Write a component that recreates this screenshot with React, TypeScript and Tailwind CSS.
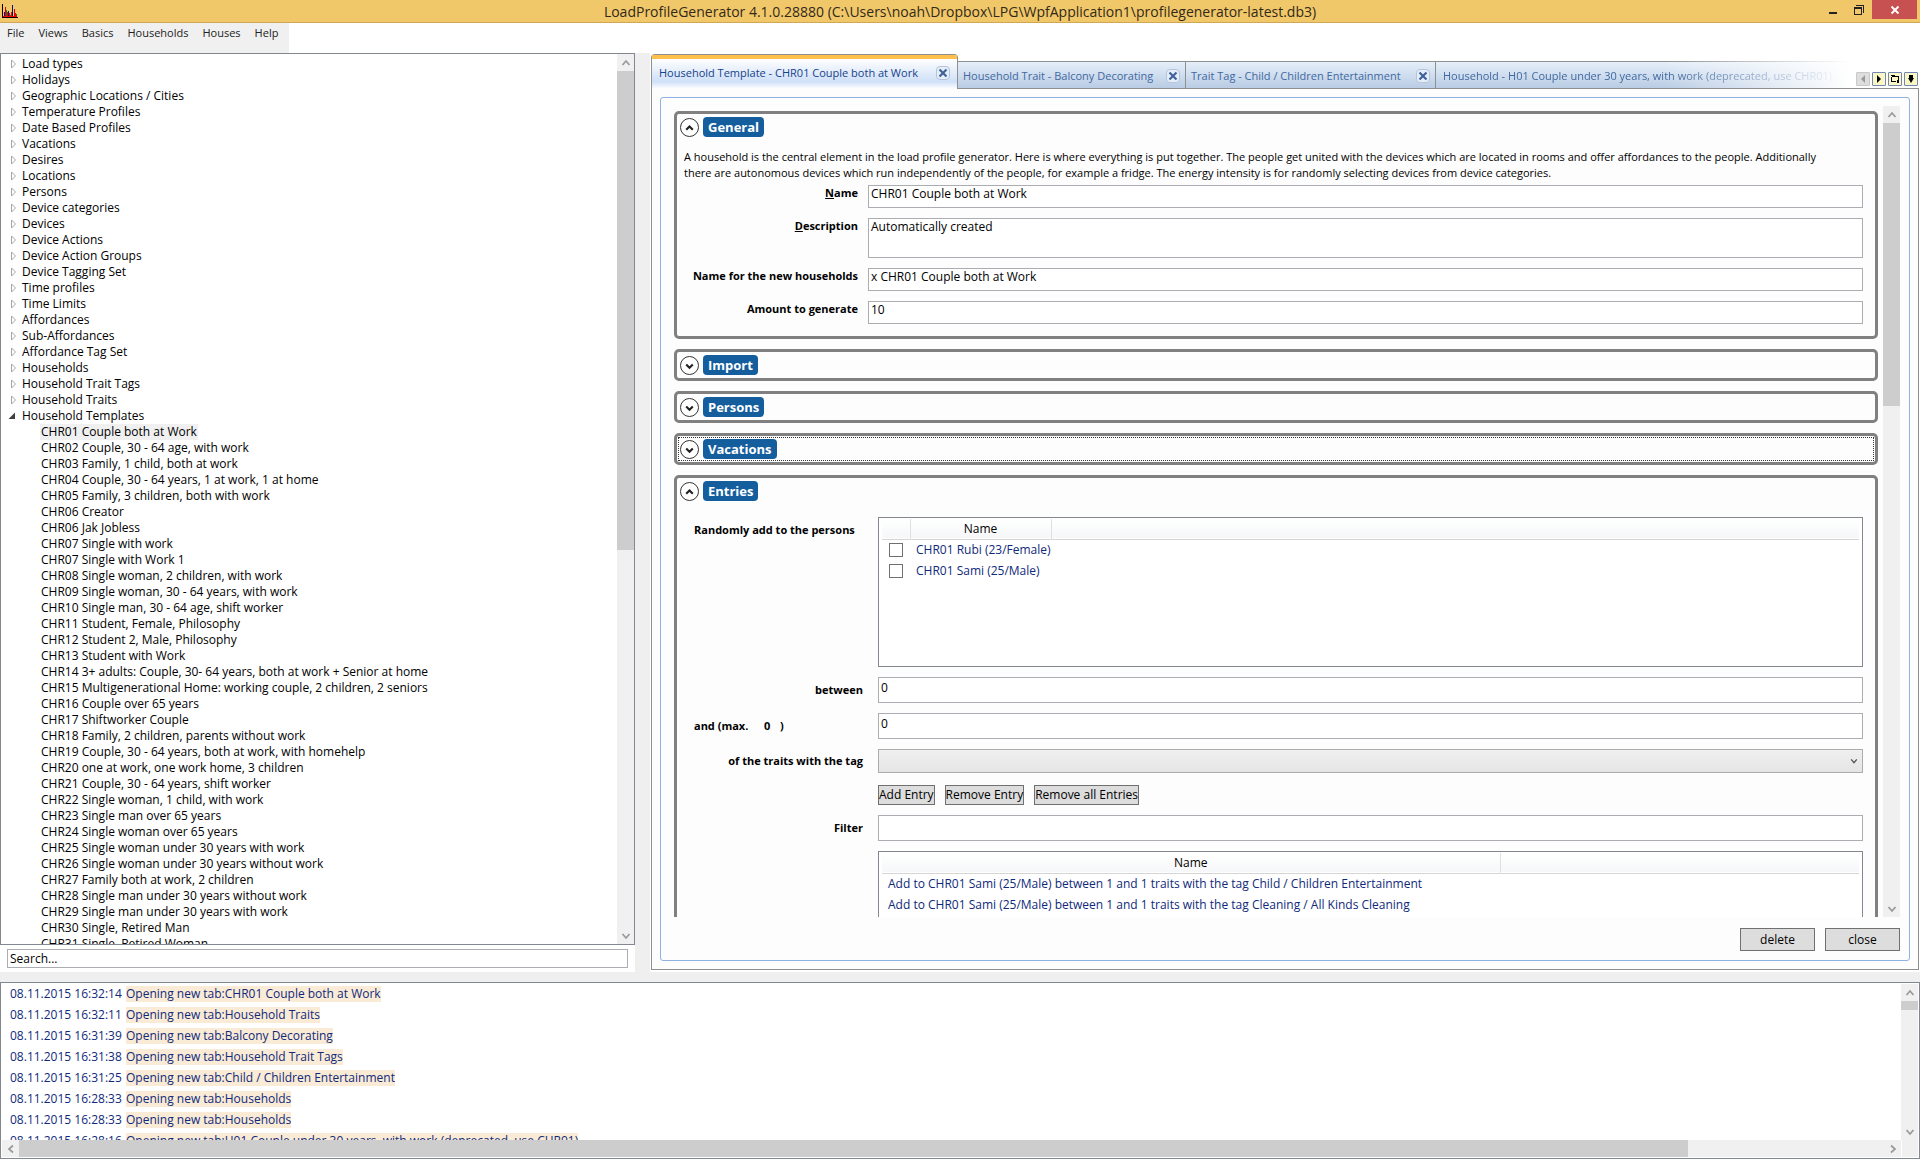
import type { ReactNode } from "react"

const categories = [
  "Load types",
  "Holidays",
  "Geographic Locations / Cities",
  "Temperature Profiles",
  "Date Based Profiles",
  "Vacations",
  "Desires",
  "Locations",
  "Persons",
  "Device categories",
  "Devices",
  "Device Actions",
  "Device Action Groups",
  "Device Tagging Set",
  "Time profiles",
  "Time Limits",
  "Affordances",
  "Sub-Affordances",
  "Affordance Tag Set",
  "Households",
  "Household Trait Tags",
  "Household Traits",
]

const templates = [
  "CHR01 Couple both at Work",
  "CHR02 Couple, 30 - 64 age, with work",
  "CHR03 Family, 1 child, both at work",
  "CHR04 Couple, 30 - 64 years, 1 at work, 1 at home",
  "CHR05 Family, 3 children, both with work",
  "CHR06 Creator",
  "CHR06 Jak Jobless",
  "CHR07 Single with work",
  "CHR07 Single with Work 1",
  "CHR08 Single woman, 2 children, with work",
  "CHR09 Single woman, 30 - 64 years, with work",
  "CHR10 Single man, 30 - 64 age, shift worker",
  "CHR11 Student, Female, Philosophy",
  "CHR12 Student 2, Male, Philosophy",
  "CHR13 Student with Work",
  "CHR14 3+ adults: Couple, 30- 64 years, both at work + Senior at home",
  "CHR15 Multigenerational Home: working couple, 2 children, 2 seniors",
  "CHR16 Couple over 65 years",
  "CHR17 Shiftworker Couple",
  "CHR18 Family, 2 children, parents without work",
  "CHR19 Couple, 30 - 64 years, both at work, with homehelp",
  "CHR20 one at work, one work home, 3 children",
  "CHR21 Couple, 30 - 64 years, shift worker",
  "CHR22 Single woman, 1 child, with work",
  "CHR23 Single man over 65 years",
  "CHR24 Single woman over 65 years",
  "CHR25 Single woman under 30 years with work",
  "CHR26 Single woman under 30 years without work",
  "CHR27 Family both at work, 2 children",
  "CHR28 Single man under 30 years without work",
  "CHR29 Single man under 30 years with work",
  "CHR30 Single, Retired Man",
  "CHR31 Single, Retired Woman",
]

const log = [
  ["08.11.2015 16:32:14", "Opening new tab:CHR01 Couple both at Work"],
  ["08.11.2015 16:32:11", "Opening new tab:Household Traits"],
  ["08.11.2015 16:31:39", "Opening new tab:Balcony Decorating"],
  ["08.11.2015 16:31:38", "Opening new tab:Household Trait Tags"],
  ["08.11.2015 16:31:25", "Opening new tab:Child / Children Entertainment"],
  ["08.11.2015 16:28:33", "Opening new tab:Households"],
  ["08.11.2015 16:28:33", "Opening new tab:Households"],
  ["08.11.2015 16:28:16", "Opening new tab:H01 Couple under 30 years, with work (deprecated, use CHR01)"],
]

const chevrons = {
  up: "M1.5 7 L5 3 L8.5 7",
  down: "M1.5 3 L5 7 L8.5 3",
  left: "M7 1.5 L3 5 L7 8.5",
  right: "M3 1.5 L7 5 L3 8.5",
}

function Chevron({ dir, className }: { dir: keyof typeof chevrons; className: string }) {
  return (
    <svg viewBox="0 0 10 10" className={className} fill="none" stroke="currentColor" strokeWidth="1.7">
      <path d={chevrons[dir]} />
    </svg>
  )
}

function ScrollBar({ thumb }: { thumb: string }) {
  return (
    <div className="flex w-[17px] shrink-0 flex-col bg-[#f0f0f0] text-[#999]">
      <button type="button" aria-label="Scroll up" className="flex h-[17px] shrink-0 items-center justify-center">
        <Chevron dir="up" className="size-[10px]" />
      </button>
      <div className="min-h-0 flex-1">
        <div className={`bg-[#cdcdcd] ${thumb}`} />
      </div>
      <button type="button" aria-label="Scroll down" className="flex h-[17px] shrink-0 items-center justify-center">
        <Chevron dir="down" className="size-[10px]" />
      </button>
    </div>
  )
}

function AppIcon() {
  return (
    <svg viewBox="0 0 16 14" className="ml-[2px] h-[14px] w-4" shapeRendering="crispEdges">
      <path d="M2 8h1v5h-1z M6 7h1v6h-1z M10 1h1v12h-1z" fill="#0a0a8c" />
      <path d="M3 3h1v10h-1z M7 9h1v4h-1z M12 5h1v8h-1z" fill="#e00000" />
      <path d="M4 6h1v7h-1z M8 11h1v2h-1z M14 10h1v3h-1z" fill="#1c7a1c" />
      <path d="M5 8h1v5h-1z M9 8h1v5h-1z M13 9h1v4h-1z" fill="#f00" />
      <path d="M1 12h14v1h-14z" fill="#f00" />
      <path d="M0 0h1v13h15v1h-16z" fill="#000" />
    </svg>
  )
}

function TitleBar() {
  return (
    <header className="flex h-[23px] shrink-0 border-b border-[#cfa755] bg-[#f0c869]">
      <div className="flex w-36 shrink-0 items-center">
        <AppIcon />
      </div>
      <h1 className="flex-1 text-center text-sm leading-[23px] text-[#33291a]">
        LoadProfileGenerator 4.1.0.28880 (C:\Users\noah\Dropbox\LPG\WpfApplication1\profilegenerator-latest.db3)
      </h1>
      <div className="flex w-36 shrink-0 items-start justify-end pr-[3px]">
        <button type="button" aria-label="Minimize" className="flex h-[19px] w-[26px] items-center justify-center">
          <svg viewBox="0 0 12 12" className="size-3" shapeRendering="crispEdges">
            <path d="M2 8h8v2h-8z" fill="#222" />
          </svg>
        </button>
        <button type="button" aria-label="Restore" className="flex h-[19px] w-[26px] items-center justify-center">
          <svg viewBox="0 0 12 12" className="size-3" shapeRendering="crispEdges" fill="#222">
            <path fillRule="evenodd" d="M1 3h8v8h-8z M2 5h6v5h-6z" />
            <path d="M3 1h8v8h-1v-7h-7z" />
          </svg>
        </button>
        <button type="button" aria-label="Close window" className="flex h-[19px] w-[45px] items-center justify-center bg-[#c75050]">
          <svg viewBox="0 0 10 10" className="size-[10px]" stroke="#fff" strokeWidth="1.9">
            <path d="M1.5 1.5 L8.5 8.5 M8.5 1.5 L1.5 8.5" />
          </svg>
        </button>
      </div>
    </header>
  )
}

function Tree() {
  return (
    <aside className="flex w-[635px] shrink-0 flex-col">
      <div className="flex min-h-0 flex-1 border border-[#828790] bg-white">
        <ul className="min-w-0 flex-1 overflow-hidden pt-[2px] whitespace-nowrap">
          {categories.map((name) => (
            <li key={name} className="flex h-4 items-center">
              <svg viewBox="0 0 6 10" className="ml-[10px] mr-[5px] h-[10px] w-[6px]" fill="none" stroke="#a6a6a6">
                <path d="M0.5 1 V9 L4.5 5 Z" />
              </svg>
              {name}
            </li>
          ))}
          <li>
            <div className="flex h-4 items-center">
              <svg viewBox="0 0 8 8" className="ml-[7px] mr-[6px] size-2" fill="#404040">
                <path d="M7 0.5 V7 H0.5 Z" />
              </svg>
              Household Templates
            </div>
            <ul className="pl-[39px]">
              {templates.map((name, i) => (
                <li key={name} className="flex h-4 items-center">
                  <span className={i === 0 ? "bg-[#f0f0f0] px-px" : "px-px"}>{name}</span>
                </li>
              ))}
            </ul>
          </li>
        </ul>
        <ScrollBar thumb="h-[56%]" />
      </div>
      <div className="px-[7px] pt-1 pb-1">
        <input
          type="text"
          aria-label="Search"
          defaultValue="Search..."
          className="block h-[19px] w-full border border-[#abadb3] bg-white px-[2px]"
        />
      </div>
    </aside>
  )
}

function TabClose() {
  return (
    <button
      type="button"
      aria-label="Close tab"
      className="flex size-[14px] shrink-0 items-center justify-center rounded-sm border border-[#b4c4dc] bg-[#e6eef8]"
    >
      <svg viewBox="0 0 10 10" className="size-[10px]" stroke="#3f6399" strokeWidth="2.2">
        <path d="M1.5 1.5 L8.5 8.5 M8.5 1.5 L1.5 8.5" />
      </svg>
    </button>
  )
}

function Tab({ label, className }: { label: string; className: string }) {
  return (
    <div
      className={`flex h-[27px] shrink-0 items-center justify-between border-t border-r border-[#8e8f8f] bg-linear-to-b from-[#e6effa] to-[#b9cce4] pt-[2px] pr-[5px] pl-[5px] text-[#41699f] ${className}`}
    >
      <span>{label}</span>
      <TabClose />
    </div>
  )
}

function NavButton({ label, disabled, children }: { label: string; disabled?: boolean; children: ReactNode }) {
  return (
    <button
      type="button"
      aria-label={label}
      disabled={disabled}
      className={`flex size-[14px] items-center justify-center rounded-[1px] border ${
        disabled ? "border-[#c9c9c9] bg-[#dedede] text-[#999]" : "border-[#7186b5] bg-[#fbf7c4] text-black"
      }`}
    >
      <svg viewBox="0 0 10 10" className="size-[10px]" fill="currentColor">
        {children}
      </svg>
    </button>
  )
}

function TabStrip() {
  return (
    <div className="relative z-10 -mb-px flex h-[36px] shrink-0 items-end text-[11px] whitespace-nowrap">
      <div className="flex h-[35px] w-[307px] shrink-0 flex-col rounded-t-sm border border-b-0 border-[#8e8f8f] bg-white">
        <div className="h-1 shrink-0 bg-[#ffc04d]" />
        <div className="flex flex-1 items-center justify-between bg-linear-to-b from-white via-[#cfe0f7] via-75% to-white pr-[7px] pb-[2px] pl-[7px] text-[#15428b]">
          <span>Household Template - CHR01 Couple both at Work</span>
          <TabClose />
        </div>
      </div>
      <div className="flex min-w-0 flex-1 items-end border-b border-[#8e8f8f]">
        <Tab label="Household Trait - Balcony Decorating" className="w-[228px]" />
        <Tab label="Trait Tag - Child / Children Entertainment" className="w-[250px]" />
        <div className="h-[27px] min-w-0 flex-1 overflow-hidden border-t border-[#8e8f8f] bg-linear-to-b from-[#e6effa] to-[#b9cce4] mask-r-from-55% mask-r-to-100% pl-[7px] leading-[28px] text-[#41699f]">
          Household - H01 Couple under 30 years, with work (deprecated, use CHR01)
        </div>
        <div className="flex shrink-0 gap-[2px] pr-[1px] pb-[2px] pl-1">
          <NavButton label="Previous tab" disabled>
            <path d="M7 1 V9 L3 5 Z" />
          </NavButton>
          <NavButton label="Next tab">
            <path d="M3 1 V9 L7 5 Z" />
          </NavButton>
          <NavButton label="Maximize">
            <path fillRule="evenodd" d="M1 1h4v1h4v4h-1v-3h-7z M1 2h1v5h4v1h-5z M7 6h2v3h-2z" />
          </NavButton>
          <NavButton label="Tab list">
            <path d="M3 1h4v3h1l-3 5l-3-5h1z" />
          </NavButton>
        </div>
      </div>
    </div>
  )
}

function Section({ title, open, focused, children }: { title: string; open?: boolean; focused?: boolean; children?: ReactNode }) {
  return (
    <section className="flex shrink-0 flex-col rounded-[5px] border-[3px] border-[#808080]">
      <button
        type="button"
        aria-expanded={!!open}
        className={`m-px flex items-center gap-1 border border-dotted p-px ${
          focused ? "border-[#333]" : "border-transparent"
        }`}
      >
        <span className="flex size-[19px] items-center justify-center rounded-full border border-[#333] bg-white">
          <svg viewBox="0 0 10 10" className="size-[11px]" fill="none" stroke="#222" strokeWidth="1.9">
            <path d={open ? "M2 7 L5 4 L8 7" : "M2 4 L5 7 L8 4"} />
          </svg>
        </span>
        <span className="rounded bg-[#155e9e] px-[5px] text-[13px] leading-5 font-bold text-white">{title}</span>
      </button>
      {children}
    </section>
  )
}

const fieldClass = "block w-full border border-[#abadb3] bg-white px-[2px]"
const boldLabel = "text-right text-[11px] leading-4 font-bold whitespace-nowrap"

function GeneralForm() {
  return (
    <div className="px-[7px] pb-3">
      <p className="pt-[9px] text-[11px] leading-4">
        A household is the central element in the load profile generator. Here is where everything is put together. The
        people get united with the devices which are located in rooms and offer affordances to the people. Additionally
        <br />
        there are autonomous devices which run independently of the people, for example a fridge. The energy intensity is
        for randomly selecting devices from device categories.
      </p>
      <div className="mt-1 grid grid-cols-[174px_1fr] gap-x-[10px] gap-y-[10px] pr-[5px]">
        <label htmlFor="name" className={boldLabel}>
          <u>N</u>ame
        </label>
        <input id="name" type="text" defaultValue="CHR01 Couple both at Work" className={`${fieldClass} h-[23px] pb-[6px]`} />
        <label htmlFor="description" className={boldLabel}>
          <u>D</u>escription
        </label>
        <textarea id="description" defaultValue="Automatically created" className={`${fieldClass} h-10 resize-none`} />
        <label htmlFor="newName" className={boldLabel}>
          Name for the new households
        </label>
        <input id="newName" type="text" defaultValue="x CHR01 Couple both at Work" className={`${fieldClass} h-[23px] pb-[6px]`} />
        <label htmlFor="amount" className={boldLabel}>
          Amount to generate
        </label>
        <input id="amount" type="text" defaultValue="10" className={`${fieldClass} h-[23px] pb-[6px]`} />
      </div>
    </div>
  )
}

const headRow = "h-5 border-b border-[#d5d5d5] bg-linear-to-b from-white to-[#f6f7f9]"

function EntriesForm() {
  return (
    <div className="grid grid-cols-[201px_1fr] items-center gap-y-[10px] pt-[13px] pr-3">
      <span className="self-start pt-[5px] pl-[17px] text-[11px] leading-4 font-bold">Randomly add to the persons</span>
      <div className="h-[150px] border border-[#828790] bg-white px-[3px] pt-px">
        <table className="w-full table-fixed border-collapse">
          <thead>
            <tr className={headRow}>
              <th className="w-[28px] border-r border-[#e0e0e0]" />
              <th className="w-[141px] border-r border-[#e0e0e0] font-normal">Name</th>
              <th />
            </tr>
          </thead>
          <tbody className="text-[#0f2a7a]">
            {["CHR01 Rubi (23/Female)", "CHR01 Sami (25/Male)"].map((person) => (
              <tr key={person} className="h-[21px]">
                <td className="pl-[7px]">
                  <input
                    type="checkbox"
                    aria-label={person}
                    className="block size-[14px] appearance-none border border-[#707070] bg-white"
                  />
                </td>
                <td className="pl-[6px] whitespace-nowrap" colSpan={2}>
                  {person}
                </td>
              </tr>
            ))}
          </tbody>
        </table>
      </div>

      <label htmlFor="min" className={`${boldLabel} pr-[15px]`}>
        between
      </label>
      <input id="min" type="text" defaultValue="0" className={`${fieldClass} h-[26px] pb-[6px]`} />

      <label htmlFor="max" className="flex pl-[17px] text-[11px] leading-4 font-bold">
        <span className="w-[70px]">and (max.</span>
        <span className="w-[16px]">0</span>
        <span>)</span>
      </label>
      <input id="max" type="text" defaultValue="0" className={`${fieldClass} h-[26px] pb-[6px]`} />

      <label htmlFor="tag" className={`${boldLabel} pr-[15px]`}>
        of the traits with the tag
      </label>
      <div className="relative">
        <select
          id="tag"
          className="block h-[24px] w-full appearance-none border border-[#acacac] bg-linear-to-b from-[#f0f0f0] to-[#e5e5e5]"
        />
        <Chevron dir="down" className="pointer-events-none absolute top-2 right-[5px] size-2 text-[#555]" />
      </div>

      <div className="col-start-2 flex gap-[10px] pt-[2px]">
        {["Add Entry", "Remove Entry", "Remove all Entries"].map((label) => (
          <button key={label} type="button" className="h-5 border border-[#707070] bg-[#ddd] leading-[18px]">
            {label}
          </button>
        ))}
      </div>

      <label htmlFor="filter" className={`${boldLabel} pr-[15px]`}>
        Filter
      </label>
      <input id="filter" type="text" className={`${fieldClass} h-[26px]`} />

      <div className="col-start-2 h-[150px] border border-[#828790] bg-white px-[3px] pt-px">
        <table className="w-full table-fixed border-collapse">
          <thead>
            <tr className={headRow}>
              <th className="w-[618px] border-r border-[#e0e0e0] font-normal">Name</th>
              <th />
            </tr>
          </thead>
          <tbody className="text-[#0f2a7a]">
            <tr className="h-[21px]">
              <td className="pl-[6px]">
                Add to CHR01 Sami (25/Male) between 1 and 1 traits with the tag Child / Children Entertainment
              </td>
            </tr>
            <tr className="h-[21px]">
              <td className="pl-[6px]">
                Add to CHR01 Sami (25/Male) between 1 and 1 traits with the tag Cleaning / All Kinds Cleaning
              </td>
            </tr>
          </tbody>
        </table>
      </div>
    </div>
  )
}

function Editor() {
  return (
    <main className="flex min-w-0 flex-1 flex-col pr-px pb-[2px]">
      <TabStrip />
      <div className="flex min-h-0 flex-1 flex-col border border-[#8e8f8f] bg-[#fdfdfd] p-2">
        <div className="flex min-h-0 flex-1 flex-col rounded-[3px] border border-[#8db2e3] pt-2 pr-[9px] pb-[9px] pl-[13px]">
          <div className="flex min-h-0 flex-1">
            <div className="flex min-w-0 flex-1 flex-col gap-[10px] overflow-hidden pt-[5px]">
              <Section title="General" open>
                <GeneralForm />
              </Section>
              <Section title="Import" />
              <Section title="Persons" />
              <Section title="Vacations" focused />
              <Section title="Entries" open>
                <EntriesForm />
              </Section>
            </div>
            <div className="ml-[5px] flex">
              <ScrollBar thumb="h-[283px]" />
            </div>
          </div>
          <div className="flex shrink-0 justify-end gap-[10px] pt-[11px]">
            <button type="button" className="h-[23px] w-[75px] border border-[#707070] bg-[#ddd]">
              delete
            </button>
            <button type="button" className="h-[23px] w-[75px] border border-[#707070] bg-[#ddd]">
              close
            </button>
          </div>
        </div>
      </div>
    </main>
  )
}

function LogPanel() {
  return (
    <footer className="mb-px flex h-[177px] shrink-0 flex-col border border-[#828790] bg-white p-px">
      <div className="flex min-h-0 flex-1">
        <div className="min-w-0 flex-1 overflow-hidden">
          <table className="text-[#0f2a7a]">
            <tbody>
              {log.map(([time, message], i) => (
                <tr key={i} className="h-[21px] align-top">
                  <td className="w-[124px] pt-[2px] pl-2 whitespace-nowrap">{time}</td>
                  <td className="pt-[2px] whitespace-nowrap">
                    <span className="inline-block bg-[#faebd7] align-top">{message}</span>
                  </td>
                </tr>
              ))}
            </tbody>
          </table>
        </div>
        <ScrollBar thumb="h-[9px]" />
      </div>
      <div className="flex h-[17px] shrink-0 text-[#999]">
        <div className="flex min-w-0 flex-1 bg-[#f0f0f0]">
          <button type="button" aria-label="Scroll left" className="flex w-[17px] shrink-0 items-center justify-center">
            <Chevron dir="left" className="size-[10px]" />
          </button>
          <div className="flex min-w-0 flex-1">
            <div className="flex-17 bg-[#cdcdcd]" />
            <div className="flex-2" />
          </div>
          <button type="button" aria-label="Scroll right" className="flex w-[17px] shrink-0 items-center justify-center">
            <Chevron dir="right" className="size-[10px]" />
          </button>
        </div>
        <div className="ml-px w-4 bg-[#f0f0f0]" />
      </div>
    </footer>
  )
}

export default function App() {
  return (
    <div className="flex h-screen flex-col overflow-hidden bg-white font-['Open_Sans','Noto_Sans',sans-serif] text-xs leading-4 text-black">
      <TitleBar />
      <nav className="flex h-[30px] shrink-0 items-start self-start bg-[#f0f0f0] pt-[2px] pr-1 text-[11px] text-[#222]">
        {["File", "Views", "Basics", "Households", "Houses", "Help"].map((item) => (
          <button key={item} type="button" className="px-[7px]">
            {item}
          </button>
        ))}
      </nav>
      <div className="flex min-h-0 flex-1">
        <Tree />
        <div className="mr-px w-[15px] shrink-0 bg-[#efefef]" />
        <Editor />
      </div>
      <div className="h-[10px] shrink-0 bg-[#efefef]" />
      <LogPanel />
    </div>
  )
}
